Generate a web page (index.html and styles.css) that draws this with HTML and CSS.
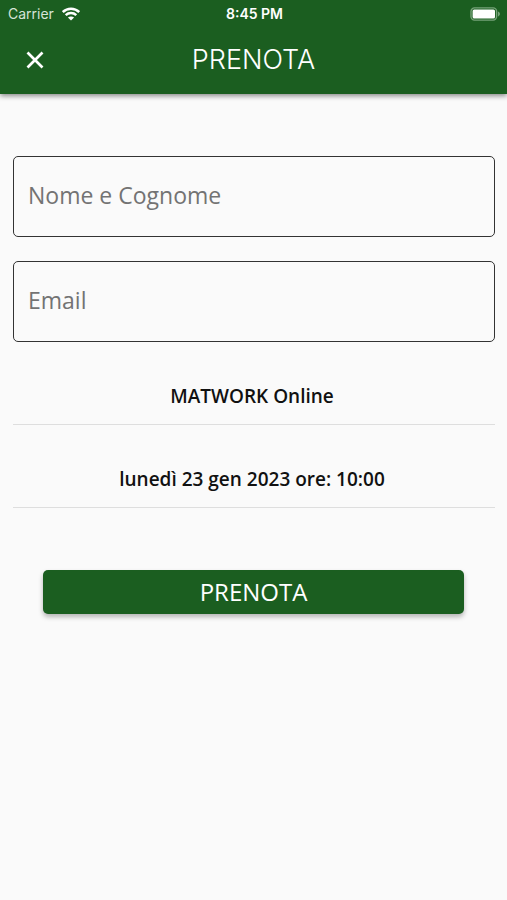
FILE: index.html
```html
<!DOCTYPE html>
<html lang="it">
<head>
<meta charset="utf-8">
<meta name="viewport" content="width=device-width, initial-scale=1">
<title>Prenota</title>
<link rel="stylesheet" href="styles.css">
</head>
<body>
<header class="app-header">
  <div class="status-bar">
    <div class="carrier">
      <span>Carrier</span>
      <svg class="wifi" viewBox="0 0 18 14" aria-hidden="true">
        <path d="M.8 5C5.4.7 12.6.7 17.2 5M3.7 8.2c3-2.8 7.6-2.8 10.6 0" fill="none" stroke="currentColor" stroke-width="2.5"/>
        <path d="M9 13.6 5.9 10.6c1.7-1.6 4.5-1.6 6.2 0z" fill="currentColor"/>
      </svg>
    </div>
    <span class="clock">8:45 PM</span>
    <svg class="battery" viewBox="0 0 31 14" aria-hidden="true">
      <rect x="1" y=".9" width="25.6" height="12.2" rx="3.5" fill="none" stroke="#76a278" stroke-width="1.4"/>
      <rect x="2.6" y="2.4" width="22.4" height="9.2" rx="1.6" fill="#fff"/>
      <path d="M28 4.6c2.6.8 2.6 4 0 4.8z" fill="#76a278"/>
    </svg>
  </div>
  <div class="toolbar">
    <button class="close" type="button" aria-label="Chiudi">
      <svg viewBox="0 0 18 18" aria-hidden="true"><path d="M1.5 1.5l15 15M16.5 1.5l-15 15" fill="none" stroke="currentColor" stroke-width="2.7"/></svg>
    </button>
    <h1 class="title">PRENOTA</h1>
  </div>
</header>
<main>
  <form class="booking">
    <input class="field" type="text" name="nome" placeholder="Nome e Cognome" aria-label="Nome e Cognome">
    <input class="field" type="email" name="email" placeholder="Email" aria-label="Email">
    <div class="details">
      <p class="detail">MATWORK Online</p>
      <p class="detail">lunedì 23 gen 2023 ore: 10:00</p>
    </div>
    <button class="submit" type="submit">PRENOTA</button>
  </form>
</main>
</body>
</html>
```
FILE: styles.css
```css
* {
  box-sizing: border-box;
}

body {
  min-height: 100vh;
  margin: 0;
  background: #fafafa;
  color: #111;
  font-family: "Open Sans", sans-serif;
}

.app-header {
  background: #1b5e20;
  color: #fff;
  box-shadow: 0 2px 5px rgba(0, 0, 0, 0.45);
}

.status-bar {
  display: grid;
  grid-template-columns: 1fr auto 1fr;
  align-items: center;
  height: 27px;
  padding: 0 6px 0 8px;
  font: 14px/28px Inter, sans-serif;
}

.carrier {
  display: flex;
  align-items: center;
  gap: 8px;
  color: #d6e4d7;
}

.wifi {
  width: 18px;
  height: 14px;
  color: #fff;
}

.clock {
  font-size: 14px;
  font-weight: 600;
}

.battery {
  justify-self: end;
  width: 31px;
  height: 14px;
}

.toolbar {
  display: grid;
  grid-template-columns: 70px 1fr 70px;
  align-items: center;
  height: 67px;
  padding-bottom: 2px;
}

.close {
  justify-self: center;
  width: 48px;
  height: 48px;
  padding: 15px;
  border: 0;
  background: none;
  color: inherit;
}

.close svg {
  display: block;
  width: 18px;
  height: 18px;
}

.title {
  margin: 0;
  font: 300 27px/30px Inter, sans-serif;
  text-align: center;
}

.booking {
  display: flex;
  flex-direction: column;
  gap: 24px;
  padding: 62px 12px 24px 13px;
}

.field {
  width: 100%;
  height: 81px;
  padding: 0 14px 4px;
  border: 1px solid #333;
  border-radius: 5px;
  background: transparent;
  color: #111;
  font: 23px/32px "Open Sans", sans-serif;
}

.field::placeholder {
  color: #737373;
  opacity: 1;
}

.detail {
  margin: 0;
  padding: 16px 4px 14px 0;
  border-bottom: 1px solid #dedede;
  font-size: 19px;
  font-weight: 600;
  line-height: 28px;
  text-align: center;
}

.detail + .detail {
  margin-top: 24px;
}

.submit {
  height: 44px;
  padding-bottom: 2px;
  margin: 38px 31px 0 30px;
  border: 0;
  border-radius: 5px;
  background: #1b5e20;
  box-shadow: 0 3px 5px rgba(0, 0, 0, 0.28);
  color: #fff;
  font: 24px/32px "Open Sans", sans-serif;
}
```
